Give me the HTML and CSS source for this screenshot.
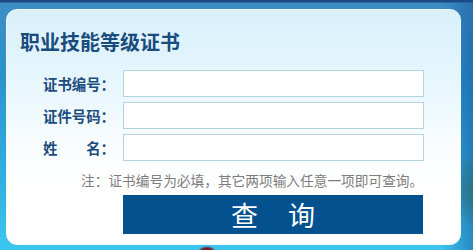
FILE: index.html
```html
<!DOCTYPE html>
<html lang="zh-CN">
<head>
<meta charset="utf-8">
<title>职业技能等级证书</title>
<link rel="stylesheet" href="styles.css">
</head>
<body>
<div class="card">
  <h1 class="title">职业技能等级证书</h1>
  <form class="form">
    <div class="row">
      <label class="label">证书编号：</label>
      <input class="field" type="text">
    </div>
    <div class="row">
      <label class="label">证件号码：</label>
      <input class="field" type="text">
    </div>
    <div class="row">
      <label class="label label-split"><span>姓</span><span>名：</span></label>
      <input class="field" type="text">
    </div>
    <p class="note">注：证书编号为必填，其它两项输入任意一项即可查询。</p>
    <button class="btn" type="button"><span>查</span><span>询</span></button>
  </form>
</div>
</body>
</html>
```
FILE: styles.css
```css
html, body {
  margin: 0;
  padding: 0;
}
body {
  width: 473px;
  height: 250px;
  overflow: hidden;
  font-family: "Noto Sans CJK SC", "Noto Sans", sans-serif;
  background:
    radial-gradient(ellipse 9px 5px at 207px 251px, #6e1e2c 0 60%, transparent 100%),
    radial-gradient(ellipse 30px 40px at 480px 190px, #2c6d73 0, transparent 100%),
    linear-gradient(90deg, transparent 0, transparent 440px, rgba(20,80,150,0.5) 473px),
    linear-gradient(180deg, #1d4a80 0, #1d4a80 2px, #3e8ec4 3px, #2b93cc 30%, #31aee0 70%, #3cc6ee 100%);
  padding: 9px 12px 5px 6px;
  box-sizing: border-box;
}
.card {
  box-sizing: border-box;
  width: 455px;
  height: 236px;
  border-radius: 11px;
  border: 1px solid #f4fbff;
  background: linear-gradient(180deg, #d8f0fb 0%, #e6f6fd 30%, #f7fcfe 55%, #ffffff 75%);
  padding: 22px 36px 0 36px;
}
.title {
  margin: 0 0 0 -23px;
  font-size: 20px;
  line-height: 20px;
  font-weight: bold;
  color: #1a4b7d;
}
.form {
  margin-top: 18px;
  display: flex;
  flex-direction: column;
}
.row {
  display: flex;
  align-items: center;
  gap: 8px;
  height: 27px;
  margin-bottom: 5px;
}
.label {
  width: 72px;
  font-size: 14.4px;
  line-height: 16px;
  font-weight: bold;
  color: #1d4c7e;
  white-space: nowrap;
}
.label-split {
  display: flex;
  justify-content: space-between;
}
.field {
  box-sizing: border-box;
  width: 301px;
  height: 27px;
  margin: 0;
  border: 1px solid #b3d4de;
  background: #fff;
  padding: 0 4px;
}
.note {
  margin: 6px 0 0 38px;
  font-size: 13.7px;
  line-height: 16px;
  color: #7d7d7d;
  white-space: nowrap;
}
.btn {
  margin: 7px 0 0 80px;
  width: 300px;
  height: 39px;
  border: 0;
  padding: 0;
  background: #03518f;
  color: #fff;
  font-family: "Noto Sans CJK SC", sans-serif;
  font-size: 27px;
  line-height: 39px;
  display: flex;
  justify-content: center;
  align-items: center;
  gap: 30px;
}
```
